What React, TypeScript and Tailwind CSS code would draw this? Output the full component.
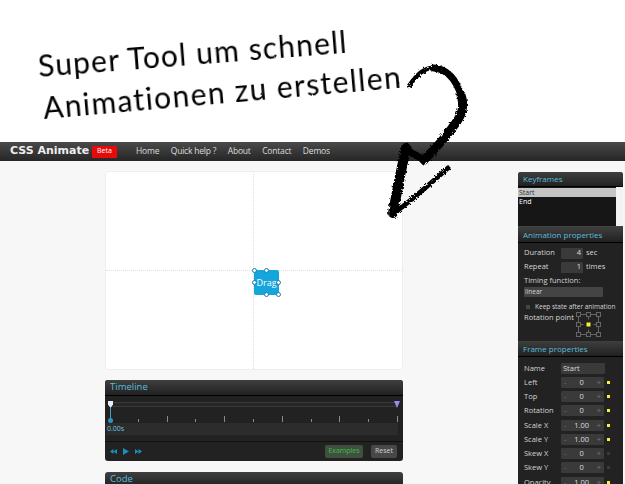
const nav = ["Home", "Quick help ?", "About", "Contact", "Demos"];

const frameRows = [
  { label: "Left", value: "0", on: true },
  { label: "Top", value: "0", on: true },
  { label: "Rotation", value: "0", on: true },
  { label: "Scale X", value: "1.00", on: true },
  { label: "Scale Y", value: "1.00", on: true },
  { label: "Skew X", value: "0", on: false },
  { label: "Skew Y", value: "0", on: false },
  { label: "Opacity", value: "1.00", on: true },
];

function PanelHead({ title, big, tall }: { title: string; big?: boolean; tall?: boolean }) {
  return (
    <div
      className={`flex items-center border-b border-black bg-gradient-to-b from-[#3f3f3f] to-[#212121] text-[#5cbcdc] ${
        big ? "h-[16px] px-[5px] text-[9.5px]" : "px-[5px] text-[8px]"
      } ${!big && tall ? "h-[16px]" : ""} ${!big && !tall ? "h-[15px]" : ""}`}
    >
      {title}
    </div>
  );
}

function Handle({ className }: { className: string }) {
  return <div className={`absolute size-[5px] rounded-full border border-[#1a7fa8] bg-white ${className}`} />;
}

function Stage() {
  return (
    <div className="relative h-[199px] rounded-[3px] border border-[#eeeeee] bg-white">
      <div className="absolute inset-y-0 left-[147px] border-l border-dotted border-[#dddddd]" />
      <div className="absolute inset-x-0 top-[98px] border-t border-dotted border-[#dddddd]" />
      <div className="absolute left-[148px] top-[98px] flex size-[25px] items-center justify-center rounded-[2px] bg-[#14a5dc] text-[9px] text-white">
        Drag
        <Handle className="-left-[2px] -top-[2px]" />
        <Handle className="left-[10px] -top-[2px]" />
        <Handle className="-left-[2px] top-[10px]" />
        <Handle className="-right-[2px] top-[10px]" />
        <Handle className="left-[10px] -bottom-[2px]" />
        <Handle className="-right-[2px] -bottom-[2px]" />
      </div>
    </div>
  );
}

function Timeline() {
  return (
    <div className="mt-[10px] h-[81px] overflow-hidden rounded-[3px] bg-[#222222]">
      <PanelHead title="Timeline" big />
      <div className="relative px-[4px] pt-[6px]">
        <div className="ml-[1px] h-[5px] w-[286px] border-y border-[#3a3a3a] bg-[#262626]" />
        <div className="absolute left-[3px] top-[5px] h-[7px] w-[5px] bg-[#e8ecff] [clip-path:polygon(0_0,100%_0,100%_50%,50%_100%,0_50%)]" />
        <div className="absolute left-[289px] top-[5px] h-[7px] w-[6px] bg-[#9a8cf0] [clip-path:polygon(0_0,100%_0,50%_100%)]" />
        <div className="absolute left-[5px] top-[12px] h-[11px] w-px bg-[#3f9fc4]" />
        <div className="absolute left-[3px] top-[22px] size-[5px] rounded-full bg-[#2f94bd]" />
        <div className="ml-[1px] flex h-[16px] w-[288px] items-end pb-px">
          {[0, 1, 2, 3, 4, 5, 6, 7, 8, 9].map((i) => (
            <div key={i} className="flex flex-1 items-end justify-end">
              <div className={`w-px bg-[#8a8a8a] ${i % 2 ? "h-[6px]" : "h-[3px]"}`} />
            </div>
          ))}
        </div>
        <div className="-ml-[3px] flex h-[12px] w-[292px] items-center bg-[#2c2c2c] pl-[1px] text-[7px] text-[#6cc4e2]">
          0.00s
        </div>
      </div>
      <div className="mt-[6px] flex h-[20px] items-center border-t border-[#111111] pl-[5px] pr-[6px]">
        <div className="flex items-center gap-[6px]">
          <svg width="7" height="5" viewBox="0 0 7 5" fill="#1d8fbc"><path d="M3.5 0v5L0 2.5zM7 0v5L3.5 2.5z" /></svg>
          <svg width="6" height="7" viewBox="0 0 6 7" fill="#1d8fbc"><path d="M0 0l6 3.5L0 7z" /></svg>
          <svg width="7" height="5" viewBox="0 0 7 5" fill="#1d8fbc"><path d="M0 0l3.5 2.5L0 5zM3.5 0L7 2.5 3.5 5z" /></svg>
        </div>
        <div className="ml-auto flex gap-[8px] text-[7px]">
          <div className="flex h-[13px] w-[38px] items-center justify-center rounded-[2px] bg-[#414f41] text-[#35c045]">Examples</div>
          <div className="flex h-[13px] w-[26px] items-center justify-center rounded-[2px] bg-[#484848] text-[#d0d0d0]">Reset</div>
        </div>
      </div>
    </div>
  );
}

function Field({ children, w = "w-[22px]" }: { children: React.ReactNode; w?: string }) {
  return (
    <div className={`flex h-[11px] items-center justify-end rounded-[1px] bg-[#3a3a3a] pr-[2px] text-[#dddddd] ${w}`}>
      {children}
    </div>
  );
}

function Rotation() {
  const pts = [2, 12, 22];
  return (
    <svg width="26" height="25" viewBox="0 0 26 25" fill="none" stroke="#666666" strokeWidth="1">
      <path d="M2.5 2.5h20v20h-20z" />
      <path d="M12.5 2.5v5M12.5 17.5v5M2.5 12.5h5M17.5 12.5h5" />
      {pts.map((x) =>
        pts.map((y) =>
          x === 12 && y === 12 ? null : <rect key={`${x}-${y}`} x={x - 1.5} y={y - 1.5} width="4" height="4" fill="#222222" />,
        ),
      )}
      <rect x="10.5" y="10.5" width="4" height="4" fill="#ffee33" stroke="none" />
    </svg>
  );
}

function Sidebar() {
  return (
    <aside className="w-[105px] overflow-hidden rounded-t-[3px] bg-[#222222] text-[7.5px] whitespace-nowrap text-[#d4d4d4]">
      <PanelHead title="Keyframes" />
      <div className="flex h-[40px] border-b border-[#444444] bg-[#161616] text-[7px]">
        <div className="flex-1 pt-[1px]">
          <div className="h-[9px] bg-[#c4c4c4] pl-[1px] leading-[9px] text-[#333333]">Start</div>
          <div className="h-[10px] pl-[1px] leading-[10px] text-white">End</div>
        </div>
        <div className="w-[7px] bg-[#f2f2f2]" />
      </div>
      <PanelHead title="Animation properties" tall />
      <div className="h-[98px] px-[6px] pt-[3px]">
        <div className="flex h-[14px] items-center">
          <span className="w-[37px]">Duration</span>
          <Field>4</Field>
          <span className="ml-[3px]">sec</span>
        </div>
        <div className="flex h-[14px] items-center">
          <span className="w-[37px]">Repeat</span>
          <Field>1</Field>
          <span className="ml-[3px]">times</span>
        </div>
        <div className="flex h-[13px] items-center">Timing function:</div>
        <div className="flex h-[10px] w-[79px] items-center rounded-[1px] bg-[#444444] pl-[1px] text-[6.5px]">linear</div>
        <div className="mt-[4px] flex h-[12px] items-center text-[6.5px]">
          <span className="ml-[2px] mr-[5px] size-[4px] bg-[#444444]" />
          Keep state after animation
        </div>
        <div className="-mt-[1px] flex h-[26px] items-start">
          <span className="w-[52px]">Rotation point</span>
          <Rotation />
        </div>
      </div>
      <PanelHead title="Frame properties" tall />
      <div className="px-[6px] pt-[4px]">
        <div className="flex h-[14.25px] items-center">
          <span className="w-[37px]">Name</span>
          <div className="flex h-[11px] w-[44px] items-center rounded-[1px] bg-[#3a3a3a] pl-[2px] text-[#dddddd]">Start</div>
        </div>
        {frameRows.map((r) => (
          <div key={r.label} className="flex h-[14.25px] items-center">
            <span className="w-[37px]">{r.label}</span>
            <div className="flex h-[11px] w-[43px] items-center justify-between rounded-[1px] bg-[#3a3a3a] px-[3px] text-[#dddddd]">
              <span className="text-[#777777]">-</span>
              <span>{r.value}</span>
              <span className="text-[#777777]">+</span>
            </div>
            <span className={`ml-[3px] size-[3px] ${r.on ? "bg-[#ffee33]" : "bg-[#3a3a3a]"}`} />
          </div>
        ))}
      </div>
    </aside>
  );
}

export default function App() {
  return (
    <div className="relative h-[484px] w-[625px] overflow-hidden bg-[#f7f7f7] font-['Open_Sans',sans-serif]">
      <div className="h-[142px] bg-white" />
      <header className="flex h-[19px] items-center bg-gradient-to-b from-[#4a4a4a] to-[#262626] pl-[10px]">
        <span className="w-[82px] font-['DejaVu_Sans',sans-serif] text-[11px] font-bold whitespace-nowrap text-[#eeeeee]">CSS Animate</span>
        <span className="flex h-[12px] w-[25px] items-center justify-center rounded-[1px] bg-[#e80a0a] text-[7px] text-white">Beta</span>
        <nav className="ml-[19px] flex gap-[11.5px] text-[8.5px] tracking-[-0.2px] text-[#dddddd]">
          {nav.map((n) => (
            <span key={n}>{n}</span>
          ))}
        </nav>
      </header>
      <main className="flex pl-[105px] pr-[2px] pt-[10px]">
        <div className="w-[298px]">
          <Stage />
          <Timeline />
          <div className="mt-[11px] overflow-hidden rounded-t-[3px] bg-[#222222]">
            <PanelHead title="Code" big />
          </div>
        </div>
        <div className="ml-auto pt-[1px]">
          <Sidebar />
        </div>
      </main>

      {/* handwritten note and arrow lie over the page */}
      <div className="absolute left-[38px] top-[50px] origin-left -rotate-[4.5deg] font-['Lato',sans-serif] text-[30px] leading-none tracking-[1.2px] whitespace-nowrap text-black [filter:url(#pen)]">
        Super Tool um schnell
      </div>
      <div className="absolute left-[43px] top-[92px] origin-left -rotate-[5deg] font-['Lato',sans-serif] text-[30px] leading-none tracking-[1.4px] whitespace-nowrap text-black [filter:url(#pen)]">
        Animationen zu erstellen
      </div>
      <svg className="absolute left-0 top-0" width="625" height="240" viewBox="0 0 625 240" fill="none" stroke="#000000" strokeLinecap="round" strokeLinejoin="round">
        <defs>
          <filter id="pen">
            <feTurbulence type="fractalNoise" baseFrequency="0.25" numOctaves="2" seed="2" />
            <feDisplacementMap in="SourceGraphic" scale="1.5" />
          </filter>
          <filter id="chalk">
            <feTurbulence type="fractalNoise" baseFrequency="0.45" numOctaves="2" seed="4" />
            <feDisplacementMap in="SourceGraphic" scale="4" />
          </filter>
        </defs>
        <g filter="url(#chalk)">
          <path d="M409 86C417 74 425 67 434 68" strokeWidth="4.5" />
          <path d="M434 68C447 69 456 80 461 95" strokeWidth="7" />
          <path d="M461 95C465 107 462 116 452 128C442 142 432 152 424 160" strokeWidth="9" />
          <path d="M424 160L407 150" strokeWidth="7" />
          <path d="M406 148C401 170 397 190 393 213" strokeWidth="10" />
          <path d="M393 214C412 200 430 184 448 168" strokeWidth="5" />
        </g>
      </svg>
    </div>
  );
}
